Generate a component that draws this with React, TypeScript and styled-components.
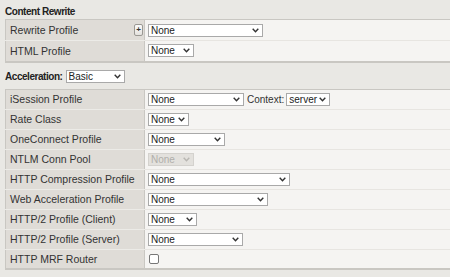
import React from 'react';
import styled, { createGlobalStyle } from 'styled-components';

const GlobalStyle = createGlobalStyle`
	html, body {
		margin: 0;
		padding: 0;
		background: #e9e8e4;
		font-family: "Liberation Sans", Arial, sans-serif;
		font-size: 10.5px;
		color: #333;
		overflow: hidden;
	}
`;

//#region styles
const Page = styled.div`
	width: 450px;
	height: 277px;
	padding: 4px 0 0 5px;
	box-sizing: border-box;
`;

const SectionTitle = styled.div`
	font-weight: 700;
	font-size: 10px;
	letter-spacing: -0.45px;
	color: #222;
	height: 15px;
	line-height: 15px;
`;

const SectionHead = styled.div`
	display: flex;
	align-items: center;
	gap: 3px;
	margin: 6px 0 4px 0;
	font-weight: 700;
	font-size: 10px;
	letter-spacing: -0.45px;
	color: #222;
	height: 16px;
`;

const Table = styled.table`
	border-collapse: collapse;
	width: 460px;
	border-top: 1px solid #c9c7c2;
	border-bottom: 2px solid #c9c7c2;
`;

const Row = styled.tr`
	height: ${props => props.$h || 20}px;
`;

const Label = styled.td`
	width: 134px;
	padding: 0 0 0 4px;
	background: #dfdcd7;
	border-left: 1px solid #c9c7c2;
	border-right: 1px solid #c9c7c2;
	border-bottom: 1px solid #ecebe7;
	white-space: nowrap;
	color: #333;
`;

const LabelInner = styled.div`
	display: flex;
	align-items: center;
	justify-content: space-between;
	padding-right: 1px;
`;

const Value = styled.td`
	padding: 0 0 0 3px;
	background: #f5f4f2;
	border-bottom: 1px solid #e7e5e1;
`;

const ValueInner = styled.div`
	display: flex;
	align-items: center;
	gap: 3px;
	font-size: 10px;
`;

const Select = styled.div`
	box-sizing: border-box;
	width: ${props => props.$w}px;
	height: 13px;
	display: flex;
	align-items: center;
	justify-content: space-between;
	padding: 0 3px 0 2px;
	background: ${props => (props.$disabled ? '#e3e1dd' : '#fff')};
	border: 1px solid ${props => (props.$disabled ? '#d4d2ce' : '#a9a9a9')};
	color: ${props => (props.$disabled ? '#b0aeaa' : '#222')};
	font-size: 10px;
	line-height: 11px;
	font-weight: 400;
	letter-spacing: 0;
`;

const Chevron = styled.svg`
	width: 7px;
	height: 5px;
	flex: none;
`;

const PlusButton = styled.div`
	box-sizing: border-box;
	width: 9px;
	height: 12px;
	border: 1px solid #9a9893;
	border-radius: 2px;
	background: linear-gradient(#fbfbfa, #e4e2de);
	display: flex;
	align-items: center;
	justify-content: center;
	font-size: 8px;
	line-height: 8px;
	color: #333;
	font-weight: 700;
`;

const Checkbox = styled.div`
	box-sizing: border-box;
	width: 10px;
	height: 10px;
	border: 1px solid #777;
	border-radius: 2px;
	background: #fff;
	margin-left: 1px;
`;

const Plain = styled.span`
	color: #333;
	font-size: 10px;
	margin-right: -1px;
`;
//#endregion

function Dropdown({ w, value = 'None', disabled = false }: { w: number; value?: string; disabled?: boolean }) {
	return (
		<Select $w={w} $disabled={disabled}>
			<span>{value}</span>
			<Chevron viewBox="0 0 7 5">
				<path d="M0.7 0.8 L3.5 3.8 L6.3 0.8" fill="none" stroke={disabled ? '#b8b6b2' : '#333'} strokeWidth="1.4" />
			</Chevron>
		</Select>
	);
}

const accelRows: { label: string; w: number; disabled?: boolean; extra?: boolean; check?: boolean }[] = [
	{ label: 'iSession Profile', w: 96, extra: true },
	{ label: 'Rate Class', w: 41 },
	{ label: 'OneConnect Profile', w: 77 },
	{ label: 'NTLM Conn Pool', w: 46, disabled: true },
	{ label: 'HTTP Compression Profile', w: 142 },
	{ label: 'Web Acceleration Profile', w: 120 },
	{ label: 'HTTP/2 Profile (Client)', w: 49 },
	{ label: 'HTTP/2 Profile (Server)', w: 95 },
	{ label: 'HTTP MRF Router', w: 0, check: true },
];

export default function App() {
	return (
		<Page>
			<GlobalStyle />
			<SectionTitle>Content Rewrite</SectionTitle>
			<Table>
				<tbody>
					<Row $h={21}>
						<Label>
							<LabelInner>
								<span>Rewrite Profile</span>
								<PlusButton>+</PlusButton>
							</LabelInner>
						</Label>
						<Value>
							<ValueInner>
								<Dropdown w={115} />
							</ValueInner>
						</Value>
					</Row>
					<Row $h={21}>
						<Label>HTML Profile</Label>
						<Value>
							<ValueInner>
								<Dropdown w={46} />
							</ValueInner>
						</Value>
					</Row>
				</tbody>
			</Table>

			<SectionHead>
				<span>Acceleration:</span>
				<Dropdown w={59} value="Basic" />
			</SectionHead>

			<Table>
				<tbody>
					{accelRows.map(r => (
						<Row key={r.label}>
							<Label>{r.label}</Label>
							<Value>
								<ValueInner>
									{r.check ? (
										<Checkbox />
									) : (
										<Dropdown w={r.w} disabled={r.disabled} />
									)}
									{r.extra && (
										<>
											<Plain>Context:</Plain>
											<Dropdown w={44} value="server" />
										</>
									)}
								</ValueInner>
							</Value>
						</Row>
					))}
				</tbody>
			</Table>
		</Page>
	);
}
